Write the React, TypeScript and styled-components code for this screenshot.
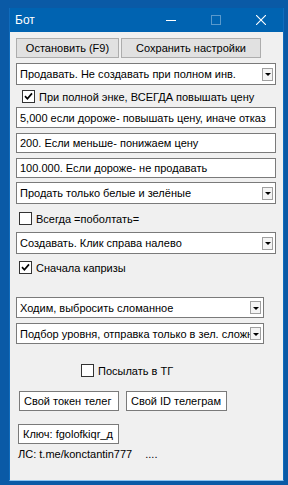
import React from 'react';
import styled, { createGlobalStyle } from 'styled-components';

const GlobalStyle = createGlobalStyle`
  html, body {
    margin: 0;
    padding: 0;
    background: #0a5aa6;
  }
  * {
    box-sizing: border-box;
  }
`;

const Desktop = styled.div`
  width: 288px;
  height: 485px;
  background: #0a5aa6;
  padding: 8px 0 0 9px;
  font-family: 'Liberation Sans', Arial, sans-serif;
  font-size: 11px;
  color: #000;
`;

const Window = styled.div`
  width: 275px;
  border: 1px solid #0f6cbd;
  border-top: none;
  border-bottom: 1px solid #8cc4f0;
  background: #0063b1;
`;

const TitleBar = styled.div`
  height: 24px;
  display: flex;
  align-items: center;
  background: #0063b1;
  color: #fff;
  font-size: 12px;
  padding-left: 5px;
`;

const Title = styled.span`
  flex: 1;
`;

const CaptionButton = styled.div<{ $dim?: boolean }>`
  width: 45px;
  height: 24px;
  display: flex;
  align-items: center;
  justify-content: center;
  opacity: ${(p) => (p.$dim ? 0.35 : 1)};
`;

const Client = styled.div`
  height: 448px;
  background: #f0f0f0;
  padding: 6px 0 0 6px;
  display: flex;
  flex-direction: column;
  align-items: flex-start;
`;

const Row = styled.div<{ $mt?: number; $ml?: number; $gap?: number }>`
  display: flex;
  align-items: center;
  gap: ${(p) => p.$gap ?? 0}px;
  margin-top: ${(p) => p.$mt ?? 0}px;
  margin-left: ${(p) => p.$ml ?? 0}px;
`;

const Button = styled.div<{ $w: number }>`
  width: ${(p) => p.$w}px;
  height: 20px;
  background: #e1e1e1;
  border: 1px solid #adadad;
  display: flex;
  align-items: center;
  justify-content: center;
  white-space: nowrap;
`;

const Combo = styled.div<{ $w: number; $h?: number; $mt: number }>`
  width: ${(p) => p.$w}px;
  height: ${(p) => p.$h ?? 22}px;
  margin-top: ${(p) => p.$mt}px;
  background: #fff;
  border: 1px solid #7a7a7a;
  display: flex;
  align-items: center;
  padding: 0 2px 0 3px;
`;

const ComboText = styled.span`
  flex: 1;
  overflow: hidden;
  white-space: nowrap;
`;

const DropButton = styled.div`
  width: 11px;
  height: 13px;
  flex: none;
  background: #f4f4f4;
  border: 1px solid #a0a0a0;
  display: flex;
  align-items: center;
  justify-content: center;
`;

const Arrow = styled.div`
  width: 0;
  height: 0;
  border-left: 3px solid transparent;
  border-right: 3px solid transparent;
  border-top: 3px solid #000;
  margin-top: 1px;
`;

const TextInput = styled.div<{ $h?: number; $mt: number }>`
  width: 260px;
  height: ${(p) => p.$h ?? 20}px;
  margin-top: ${(p) => p.$mt}px;
  background: #fff;
  border: 1px solid #7a7a7a;
  display: flex;
  align-items: center;
  padding: 0 3px;
  white-space: nowrap;
  overflow: hidden;
`;

const Box = styled.div`
  width: 13px;
  height: 13px;
  background: #fff;
  border: 1px solid #333;
  display: flex;
  align-items: center;
  justify-content: center;
  flex: none;
`;

const CheckLabel = styled.span`
  white-space: nowrap;
`;

const FieldButton = styled.div<{ $w: number }>`
  width: ${(p) => p.$w}px;
  height: 20px;
  background: #fff;
  border: 1px solid #7a7a7a;
  display: flex;
  align-items: center;
  padding: 0 3px 0 4px;
  white-space: nowrap;
  overflow: hidden;
`;

const Footer = styled.div`
  margin-top: 4px;
  margin-left: 2px;
  white-space: nowrap;
  display: flex;
  gap: 13px;
`;

const CheckBox: React.FC<{ checked?: boolean; label: string; mt: number; ml: number; gap?: number }> = ({
  checked,
  label,
  mt,
  ml,
  gap = 4,
}) => (
  <Row $mt={mt} $ml={ml} $gap={gap}>
    <Box>
      {checked && (
        <svg width="9" height="9" viewBox="0 0 9 9">
          <path d="M1 4.2 L3.4 6.8 L8 1.4" stroke="#000" strokeWidth="1.7" fill="none" />
        </svg>
      )}
    </Box>
    <CheckLabel>{label}</CheckLabel>
  </Row>
);

const Select: React.FC<{ text: string; w?: number; h?: number; mt: number }> = ({ text, w = 260, h, mt }) => (
  <Combo $w={w} $h={h} $mt={mt}>
    <ComboText>{text}</ComboText>
    <DropButton>
      <Arrow />
    </DropButton>
  </Combo>
);

const App: React.FC = () => {
  return (
    <Desktop>
      <GlobalStyle />
      <Window>
        <TitleBar>
          <Title>Бот</Title>
          <CaptionButton>
            <svg width="10" height="10" viewBox="0 0 10 10">
              <path d="M0 5.5 H10" stroke="#fff" strokeWidth="1" />
            </svg>
          </CaptionButton>
          <CaptionButton $dim>
            <svg width="10" height="10" viewBox="0 0 10 10">
              <rect x="0.5" y="0.5" width="9" height="9" stroke="#fff" strokeWidth="1" fill="none" />
            </svg>
          </CaptionButton>
          <CaptionButton>
            <svg width="10" height="10" viewBox="0 0 10 10">
              <path d="M0 0 L10 10 M10 0 L0 10" stroke="#fff" strokeWidth="1.1" />
            </svg>
          </CaptionButton>
        </TitleBar>
        <Client>
          <Row $gap={2}>
            <Button $w={103}>Остановить (F9)</Button>
            <Button $w={140}>Сохранить настройки</Button>
          </Row>
          <Select mt={5} text="Продавать. Не создавать при полном инв." />
          <CheckBox checked mt={5} ml={6} label="При полной энке, ВСЕГДА повышать цену" />
          <TextInput $mt={4} $h={21}>5,000 если дороже- повышать цену, иначе отказ</TextInput>
          <TextInput $mt={5}>200. Если меньше- понижаем цену</TextInput>
          <TextInput $mt={5}>100.000. Если дороже- не продавать</TextInput>
          <Select mt={4} text="Продать только белые и зелёные" />
          <CheckBox mt={8} ml={3} label="Всегда =поболтать=" />
          <Select mt={7} text="Создавать. Клик справа налево" />
          <CheckBox checked mt={7} ml={3} label="Сначала капризы" />
          <Select mt={23} w={248} h={21} text="Ходим, выбросить сломанное" />
          <Select mt={5} w={248} h={21} text="Подбор уровня, отправка только в зел. сложность" />
          <CheckBox mt={20} ml={65} label="Посылать в ТГ" />
          <Row $mt={14} $ml={3} $gap={7}>
            <FieldButton $w={100}>Свой токен телег</FieldButton>
            <FieldButton $w={101}>Свой ID телеграм</FieldButton>
          </Row>
          <Row $mt={13} $ml={2}>
            <FieldButton $w={101}>Ключ: fgolofkiqr_д</FieldButton>
          </Row>
          <Footer>
            <span>ЛС: t.me/konctantin777</span>
            <span>....</span>
          </Footer>
        </Client>
      </Window>
    </Desktop>
  );
};

export default App;
